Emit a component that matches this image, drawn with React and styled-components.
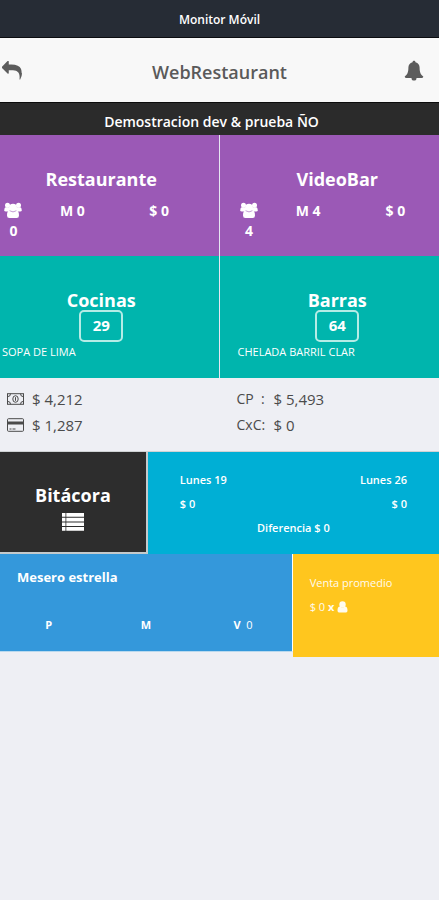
import React from 'react'
import styled, { createGlobalStyle } from 'styled-components';

const GlobalStyle = createGlobalStyle`
    body {
        margin: 0;
        background-color: #eeeff4;
        font-family: 'Open Sans', 'Noto Sans', sans-serif;
        color: #fff;
    }
    * {
        box-sizing: border-box;
    }
    h1, h2, h3, p, dl, dd, dt {
        margin: 0;
    }
`;

const areas = [
    { name: 'Restaurante', people: 0, tables: 0, total: 0 },
    { name: 'VideoBar', people: 4, tables: 4, total: 0 },
];

const stations = [
    { name: 'Cocinas', pending: 29, last: 'SOPA DE LIMA' },
    { name: 'Barras', pending: 64, last: 'CHELADA BARRIL CLAR' },
];

const ReplyIcon = () => (
    <svg width="20" height="20" viewBox="0 0 1792 1792" fill="currentColor" aria-hidden="true">
        <path d="M1792 1120q0 166-127 451-3 7-10.500 24t-13.500 30-13 22q-12 17-28 17-15 0-23.500-10t-8.500-25q0-9 2.500-26.500t2.500-23.500q5-68 5-123 0-112-19.500-200.500t-54-153.500-89-113.500-114-82.500-139.500-52-156-27.500-175.500-7h-224v256q0 26-19 45t-45 19-45-19l-512-512q-19-19-19-45t19-45l512-512q19-19 45-19t45 19 19 45v256h224q713 0 875 403 53 134 53 333z" />
    </svg>
);

const BellIcon = () => (
    <svg width="20" height="22" viewBox="0 0 20 22" fill="currentColor" aria-hidden="true">
        <path d="M10 0.800C10.900 0.800 11.500 1.400 11.500 2.300C14.200 2.900 15.600 5 15.600 7.600C15.600 12.400 16.800 14.800 19.300 16.600Q19.300 17.900 18 17.900H12.500A2.500 2.700 0 0 1 7.500 17.900H2Q0.700 17.900 0.700 16.600C3.200 14.800 4.400 12.400 4.400 7.600C4.400 5 5.800 2.900 8.500 2.300C8.500 1.400 9.100 0.800 10 0.800Z" />
    </svg>
);

const UsersIcon = () => (
    <svg width="18" height="17" viewBox="0 0 18 17" fill="currentColor" aria-hidden="true">
        <circle cx="3.500" cy="3.200" r="2.500" />
        <circle cx="14.500" cy="3.200" r="2.500" />
        <path d="M0.300 8.200C0.300 6.200 0.900 5.200 1.900 5.200H16.100C17.100 5.200 17.700 6.200 17.700 8.200Q17.700 9.600 16.200 9.600H1.800Q0.300 9.600 0.300 8.200Z" />
        <circle cx="9" cy="5.700" r="3.900" />
        <path d="M3 13.500C3 10.500 3.900 8.600 5.800 8.600Q9 11 12.200 8.600C14.100 8.600 15 10.500 15 13.500Q15 16 12.600 16H5.400Q3 16 3 13.500Z" />
        <path d="M5.600 8.700Q9 11.200 12.400 8.700" fill="none" stroke="#b98bcb" strokeWidth="0.800" />
    </svg>
);

const MoneyIcon = () => (
    <svg width="17" height="12" viewBox="0 0 17 12" fill="none" stroke="currentColor" aria-hidden="true">
        <rect x="0.500" y="0.700" width="16" height="10.600" />
        <path d="M3.500 0.700A3 3 0 0 1 0.500 3.700M13.500 0.700A3 3 0 0 0 16.500 3.700M0.500 8.300A3 3 0 0 1 3.500 11.300M16.500 8.300A3 3 0 0 0 13.500 11.300" />
        <ellipse cx="8.500" cy="6" rx="2.700" ry="3.300" />
        <path d="M8.500 4.200V7.800" />
    </svg>
);

const CardIcon = () => (
    <svg width="17" height="14" viewBox="0 0 17 14" fill="none" stroke="currentColor" aria-hidden="true">
        <rect x="0.500" y="0.700" width="16" height="12.600" rx="1" />
        <path d="M1 5H16" strokeWidth="3" />
        <path d="M2.500 11H4.500M5.500 11H8.500" />
    </svg>
);

const ListIcon = () => (
    <svg width="22" height="18" viewBox="0 0 22 18" fill="currentColor" aria-hidden="true">
        <path d="M0 0H3.500V3.700H0ZM4.300 0H22V3.700H4.300ZM0 4.700H3.500V8.400H0ZM4.300 4.700H22V8.400H4.300ZM0 9.400H3.500V13.100H0ZM4.300 9.400H22V13.100H4.300ZM0 14.100H3.500V17.800H0ZM4.300 14.100H22V17.800H4.300Z" />
    </svg>
);

const UserIcon = () => (
    <svg width="11" height="12" viewBox="0 0 11 12" fill="currentColor" aria-label="persona">
        <circle cx="5.500" cy="3.500" r="3.200" />
        <path d="M0.500 9.500C0.500 7 1.300 5.800 3 5.600Q5.500 7.400 8 5.600C9.700 5.800 10.500 7 10.500 9.500Q10.500 11.500 9 11.500H2Q0.500 11.500 0.500 9.500Z" />
    </svg>
);

const App = () => (
    <Monitor>
        <GlobalStyle />
        <StatusBar>Monitor Móvil</StatusBar>
        <NavBar>
            <IconButton aria-label="Regresar"><ReplyIcon /></IconButton>
            <h1>WebRestaurant</h1>
            <IconButton aria-label="Notificaciones"><BellIcon /></IconButton>
        </NavBar>
        <Company>Demostracion dev &amp; prueba ÑO</Company>

        <TileGrid>
            {areas.map((area) => (
                <Tile key={area.name} $color="#9b59b6">
                    <TileTitle>{area.name}</TileTitle>
                    <AreaStats>
                        <People><UsersIcon /><span>{area.people}</span></People>
                        <span>M {area.tables}</span>
                        <span>$ {area.total}</span>
                    </AreaStats>
                </Tile>
            ))}
            {stations.map((station) => (
                <Tile key={station.name} $color="#00b5ad">
                    <TileTitle>{station.name}</TileTitle>
                    <Pending>{station.pending}</Pending>
                    <LastDish>{station.last}</LastDish>
                </Tile>
            ))}
        </TileGrid>

        <Summary>
            <div><dt aria-label="Efectivo"><MoneyIcon /></dt><dd>$ 4,212</dd></div>
            <div><dt>CP &nbsp;:</dt><dd>$ 5,493</dd></div>
            <div><dt aria-label="Tarjeta"><CardIcon /></dt><dd>$ 1,287</dd></div>
            <div><dt>CxC:</dt><dd>$ 0</dd></div>
        </Summary>

        <Row $columns="34fr 67fr">
            <Log>
                <h2>Bitácora</h2>
                <ListIcon />
            </Log>
            <Compare>
                <div><span>Lunes 19</span><span>Lunes 26</span></div>
                <div><span>$ 0</span><span>$ 0</span></div>
                <p>Diferencia $ 0</p>
            </Compare>
        </Row>
        <Row $columns="2fr 1fr">
            <Waiter>
                <h3>Mesero estrella</h3>
                <div>
                    <b>P</b>
                    <b>M</b>
                    <span><b>V</b>&nbsp; 0</span>
                </div>
            </Waiter>
            <Average>
                <p>Venta promedio</p>
                <p>$ 0 <b>x</b> <UserIcon /></p>
            </Average>
        </Row>
    </Monitor>
);

export default App;

const Monitor = styled.main`
    width: 100%;
    min-height: 100vh;
`;

const StatusBar = styled.div`
    height: 38px;
    padding-top: 2px;
    background-color: #262c35;
    border-bottom: 1px solid #0b0d10;
    font-size: 12px;
    font-weight: 600;
    line-height: 36px;
    text-align: center;
`;

const IconButton = styled.button`
    display: flex;
    padding: 0;
    border: 0;
    background: none;
    color: #5c5c5c;
    cursor: pointer;
`;

const NavBar = styled.header`
    display: grid;
    grid-template-columns: 1fr auto 1fr;
    align-items: center;
    height: 64px;
    padding-top: 2px;
    background-color: #f8f8f8;
    color: #5a5a5a;
    h1 {
        padding-top: 2px;
        font-size: 18px;
        font-weight: 600;
        line-height: 24px;
    }
    ${IconButton}:first-child {
        padding-left: 2px;
    }
    ${IconButton}:last-child {
        justify-content: flex-end;
        padding-right: 15px;
    }
`;

const Company = styled.div`
    height: 33px;
    padding-top: 2px;
    padding-right: 16px;
    background-color: #2b2b2b;
    border-top: 1px solid #0c0c0c;
    font-size: 14px;
    font-weight: 600;
    line-height: 34px;
    text-align: center;
`;

const TileGrid = styled.section`
    display: grid;
    grid-template-columns: 1fr 1fr;
`;

const Tile = styled.article`
    display: flex;
    flex-direction: column;
    align-items: center;
    height: ${(props) => (props.$color === '#9b59b6' ? 121 : 122)}px;
    padding: 32px 16px 0 0;
    background-color: ${(props) => props.$color};
    border-right: 1px solid #e6e6f2;
    &:nth-child(even) {
        padding: 32px 0 0 16px;
        border-right: 0;
    }
`;

const TileTitle = styled.h2`
    font-size: 18px;
    font-weight: 700;
    line-height: 24px;
`;

const AreaStats = styled.div`
    display: grid;
    grid-template-columns: 1fr 3fr 3fr;
    width: 100%;
    margin-top: 10px;
    font-size: 14px;
    font-weight: 700;
    line-height: 20px;
    text-align: center;
`;

const People = styled.div`
    display: flex;
    flex-direction: column;
    align-items: center;
    padding-top: 1px;
    padding-right: 2px;
    gap: 2px;
`;

const Pending = styled.div`
    width: 44px;
    height: 32px;
    margin-top: -2px;
    border: 2px solid #b5ece6;
    border-radius: 5px;
    font-size: 15px;
    font-weight: 700;
    line-height: 26px;
    text-align: center;
`;

const LastDish = styled.p`
    align-self: flex-start;
    padding: 2px 2px 0;
    font-size: 11px;
    line-height: 16px;
`;

const Summary = styled.dl`
    display: grid;
    grid-template-columns: 1fr 1fr;
    align-content: start;
    height: 74px;
    padding-top: 8px;
    border-bottom: 1px solid #cfd2d4;
    color: #4b4b4b;
    font-size: 15px;
    line-height: 26px;
    div {
        display: flex;
        gap: 8px;
        padding-left: 7px;
    }
    div:nth-child(even) {
        padding-left: 17px;
    }
    dt {
        display: flex;
        align-items: center;
        white-space: nowrap;
    }
    div:nth-child(even) dt {
        width: 29px;
        font-size: 14px;
    }
`;

const Row = styled.section`
    display: grid;
    grid-template-columns: ${(props) => props.$columns};
    align-items: start;
`;

const Log = styled.div`
    display: flex;
    flex-direction: column;
    align-items: center;
    gap: 6px;
    height: 102px;
    padding-top: 31px;
    background-color: #2d2d2d;
    border-right: 2px solid #c4cacc;
    border-bottom: 2px solid #c4cacc;
    h2 {
        font-size: 18px;
        font-weight: 700;
        line-height: 24px;
    }
`;

const Compare = styled.div`
    height: 102px;
    padding: 16px 32px 0;
    background-color: #00afd5;
    font-size: 11px;
    font-weight: 600;
    line-height: 24px;
    div {
        display: flex;
        justify-content: space-between;
    }
    p {
        text-align: center;
    }
`;

const Waiter = styled.div`
    height: 98px;
    padding-top: 11px;
    background-color: #3498db;
    border-right: 1px solid #fff;
    border-bottom: 1px solid #b9d9ee;
    h3 {
        padding-left: 17px;
        font-size: 13px;
        font-weight: 700;
        line-height: 24px;
    }
    div {
        display: grid;
        grid-template-columns: 1fr 1fr 1fr;
        padding-top: 24px;
        font-size: 11px;
        line-height: 24px;
        text-align: center;
    }
`;

const Average = styled.div`
    height: 103px;
    padding: 17px 0 0 17px;
    background-color: #ffc61e;
    color: #fffbef;
    font-size: 11px;
    line-height: 24px;
    svg {
        vertical-align: -2px;
    }
`;
